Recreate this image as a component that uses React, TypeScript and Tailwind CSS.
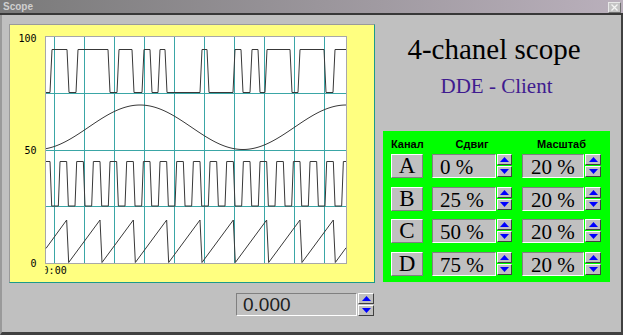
import React from 'react';

type Pt = [number, number];

const toPath = (pts: Pt[]) => pts.map(([x, y]) => `${x.toFixed(2)},${y.toFixed(2)}`).join(' ');

// pulse trace: toggles between two levels at each edge
const pulse = (edges: number[], yHi: number, yLo: number, startHigh: boolean, tw: number): Pt[] => {
  let cur = startHigh ? yHi : yLo;
  const pts: Pt[] = [[46, cur]];
  edges.forEach((e) => {
    pts.push([e, cur]);
    cur = cur === yHi ? yLo : yHi;
    pts.push([e + tw, cur]);
  });
  pts.push([346, cur]);
  return pts;
};

const ch1 = pulse([50, 67, 76, 108, 117, 132, 142, 150, 158, 165, 200, 207, 233, 241, 250, 258, 265, 290, 298, 324, 333], 49.5, 92.5, false, 2);

const sqEdges: number[] = [];
for (let k = 0; k < 18; k++) {
  const f = 50 + 16.667 * k;
  const r = 58.333 + 16.667 * k;
  if (f < 345) sqEdges.push(f);
  if (r < 345) sqEdges.push(r);
}
const ch3 = pulse(sqEdges, 161.5, 206, true, 1.7);

const ch2: Pt[] = [];
for (let x = 46; x <= 346; x += 2) ch2.push([x, 127.25 + 22.25 * Math.cos((2 * Math.PI * (x - 37)) / 206)]);

const ch4: Pt[] = [[46, 248.4]];
for (let k = 0; k < 9; k++) {
  const t = 66.67 + 33.33 * k;
  ch4.push([t, 220]);
  ch4.push([t + 2, 262.5]);
}
ch4.push([346, 262.5 - (42.5 * (346 - 335.3)) / 31]);

const vLines = Array.from({ length: 10 }, (_, i) => 54.5 + 30 * i);

const Scope = () => (
  <svg width={364} height={257} viewBox="10 25 364 257" className="block">
    <defs>
      <clipPath id="tclip">
        <rect x={45.5} y={260} width={60} height={20} />
      </clipPath>
    </defs>
    <rect x={45.5} y={36.5} width={301} height={227} fill="#fff" stroke="#a8a8a8" shapeRendering="crispEdges" />
    <g stroke="#3aa6a6" strokeWidth={1} shapeRendering="crispEdges">
      {[93.5, 150.5, 206.5].map((y) => (
        <line key={y} x1={46} x2={346} y1={y} y2={y} />
      ))}
      {vLines.map((x) => (
        <line key={x} x1={x} x2={x} y1={37} y2={263} />
      ))}
    </g>
    <g fill="none" stroke="#383838" strokeWidth={1}>
      <polyline points={toPath(ch1)} />
      <polyline points={toPath(ch2)} />
      <polyline points={toPath(ch3)} />
      <polyline points={toPath(ch4)} />
    </g>
    <g fontFamily="'DejaVu Sans Mono', monospace" fontSize={10} fill="#000">
      <text x={36.5} y={41.7} textAnchor="end">100</text>
      <text x={36.5} y={154.3} textAnchor="end">50</text>
      <text x={36.5} y={266.8} textAnchor="end">0</text>
      <text x={42.6} y={274.3} clipPath="url(#tclip)">0:00</text>
    </g>
  </svg>
);

const Arrow = ({ up }: { up?: boolean }) => (
  <svg width={9} height={5} viewBox="0 0 9 5">
    <polygon points={up ? '0,5 4.5,0 9,5' : '0,0 9,0 4.5,5'} fill="#0000ff" />
  </svg>
);

const spinBtn =
  'flex-1 flex items-center justify-center bg-[#c0c0c0] border border-t-white border-l-white border-b-[#404040] border-r-[#404040]';

const Spinner = ({ w }: { w: string }) => (
  <div className={`${w} h-[23px] flex flex-col gap-[1px]`}>
    <div className={spinBtn}>
      <Arrow up />
    </div>
    <div className={spinBtn}>
      <Arrow />
    </div>
  </div>
);

const sunken = 'bg-[#c0c0c0] border border-t-[#808080] border-l-[#808080] border-b-white border-r-white';
const serif = "font-['Liberation_Serif','Times_New_Roman',serif]";

const rows = [
  { ch: 'A', shift: '0 %', scale: '20 %' },
  { ch: 'B', shift: '25 %', scale: '20 %' },
  { ch: 'C', shift: '50 %', scale: '20 %' },
  { ch: 'D', shift: '75 %', scale: '20 %' },
];

export default function App() {
  return (
    <div className="w-[623px] h-[335px] flex flex-col bg-[#c0c0c0] font-['Liberation_Sans',Arial,sans-serif] overflow-hidden">
      {/* title bar */}
      <div className="h-[15px] flex items-start justify-between bg-linear-to-r from-[#7a7a7a] to-[#bab0bc] border-b-2 border-[#383838]">
        <span className="ml-[3px] mt-[1px] text-[10px] leading-[12px] font-bold text-[#cfcfcf]">Scope</span>
        <div className="mt-[2px] mr-[2px] w-[13px] h-[11px] flex items-center justify-center bg-[#c4c4c4] border border-t-[#e8e8e8] border-l-[#e8e8e8] border-b-[#707070] border-r-[#707070]">
          <svg width={7} height={7} viewBox="0 0 7 7">
            <path d="M0.5 0.5 L6.5 6.5 M6.5 0.5 L0.5 6.5" stroke="#f4f4f4" strokeWidth={1.3} />
          </svg>
        </div>
      </div>

      <div className="flex-1 flex border-l-2 border-l-[#9a9a9a] border-r-2 border-r-[#404040] border-b-[3px] border-b-[#404040]">
        {/* left: scope and time field */}
        <div className="ml-[7px] mt-[9px] w-[366px] flex flex-col">
          <div className="h-[259px] bg-[#ffff80] border border-t-[#9a9a9a] border-l-[#9a9a9a] border-b-[#1a9a8a] border-r-[#1a9a8a]">
            <Scope />
          </div>
          <div className="mt-[10px] flex justify-end pr-[1px]">
            <div className={`${sunken} w-[121px] h-[23px] pl-[6px] text-[19px] leading-[21px] text-[#202020]`}>0.000</div>
            <div className="ml-[1px]">
              <Spinner w="w-[16px]" />
            </div>
          </div>
        </div>

        {/* right: title and channel table */}
        <div className="ml-[8px] w-[227px] flex flex-col">
          <div className={`${serif} mt-[18px] mr-[5px] text-center text-[29px] leading-[32px] text-black`}>4-chanel scope</div>
          <div className={`${serif} mt-[9px] text-center text-[21px] leading-[24px] text-[#3f1b8f]`}>DDE - Client</div>
          <div className="mt-[33px] h-[151px] bg-[#00ff00] pl-[8px] pt-[7px]">
            <div className="flex h-[12px] text-[11px] leading-[12px] font-bold text-black">
              <div className="w-[32px] text-center">Канал</div>
              <div className="ml-[9px] w-[80px] text-center">Сдвиг</div>
              <div className="ml-[10px] w-[79px] text-center">Масштаб</div>
            </div>
            <div className="mt-[4px] flex flex-col gap-[8.5px]">
              {rows.map((r) => (
                <div key={r.ch} className="flex h-[24px] items-start">
                  <div
                    className={`${serif} w-[32px] h-[24px] flex items-center justify-center bg-[#c0c0c0] border border-t-white border-l-white border-b-[#808080] border-r-[#808080] text-[23px] leading-[22px] text-black`}
                  >
                    {r.ch}
                  </div>
                  <div className={`${sunken} ${serif} ml-[9px] w-[64px] h-[24px] pl-[7px] text-[21px] leading-[22px] pt-[1px] text-black`}>
                    {r.shift}
                  </div>
                  <div className="ml-[1px]">
                    <Spinner w="w-[15px]" />
                  </div>
                  <div className={`${sunken} ${serif} ml-[10px] w-[62px] h-[24px] pl-[8px] text-[21px] leading-[22px] pt-[1px] text-black`}>
                    {r.scale}
                  </div>
                  <div className="ml-[1px]">
                    <Spinner w="w-[16px]" />
                  </div>
                </div>
              ))}
            </div>
          </div>
        </div>
      </div>
    </div>
  );
}
